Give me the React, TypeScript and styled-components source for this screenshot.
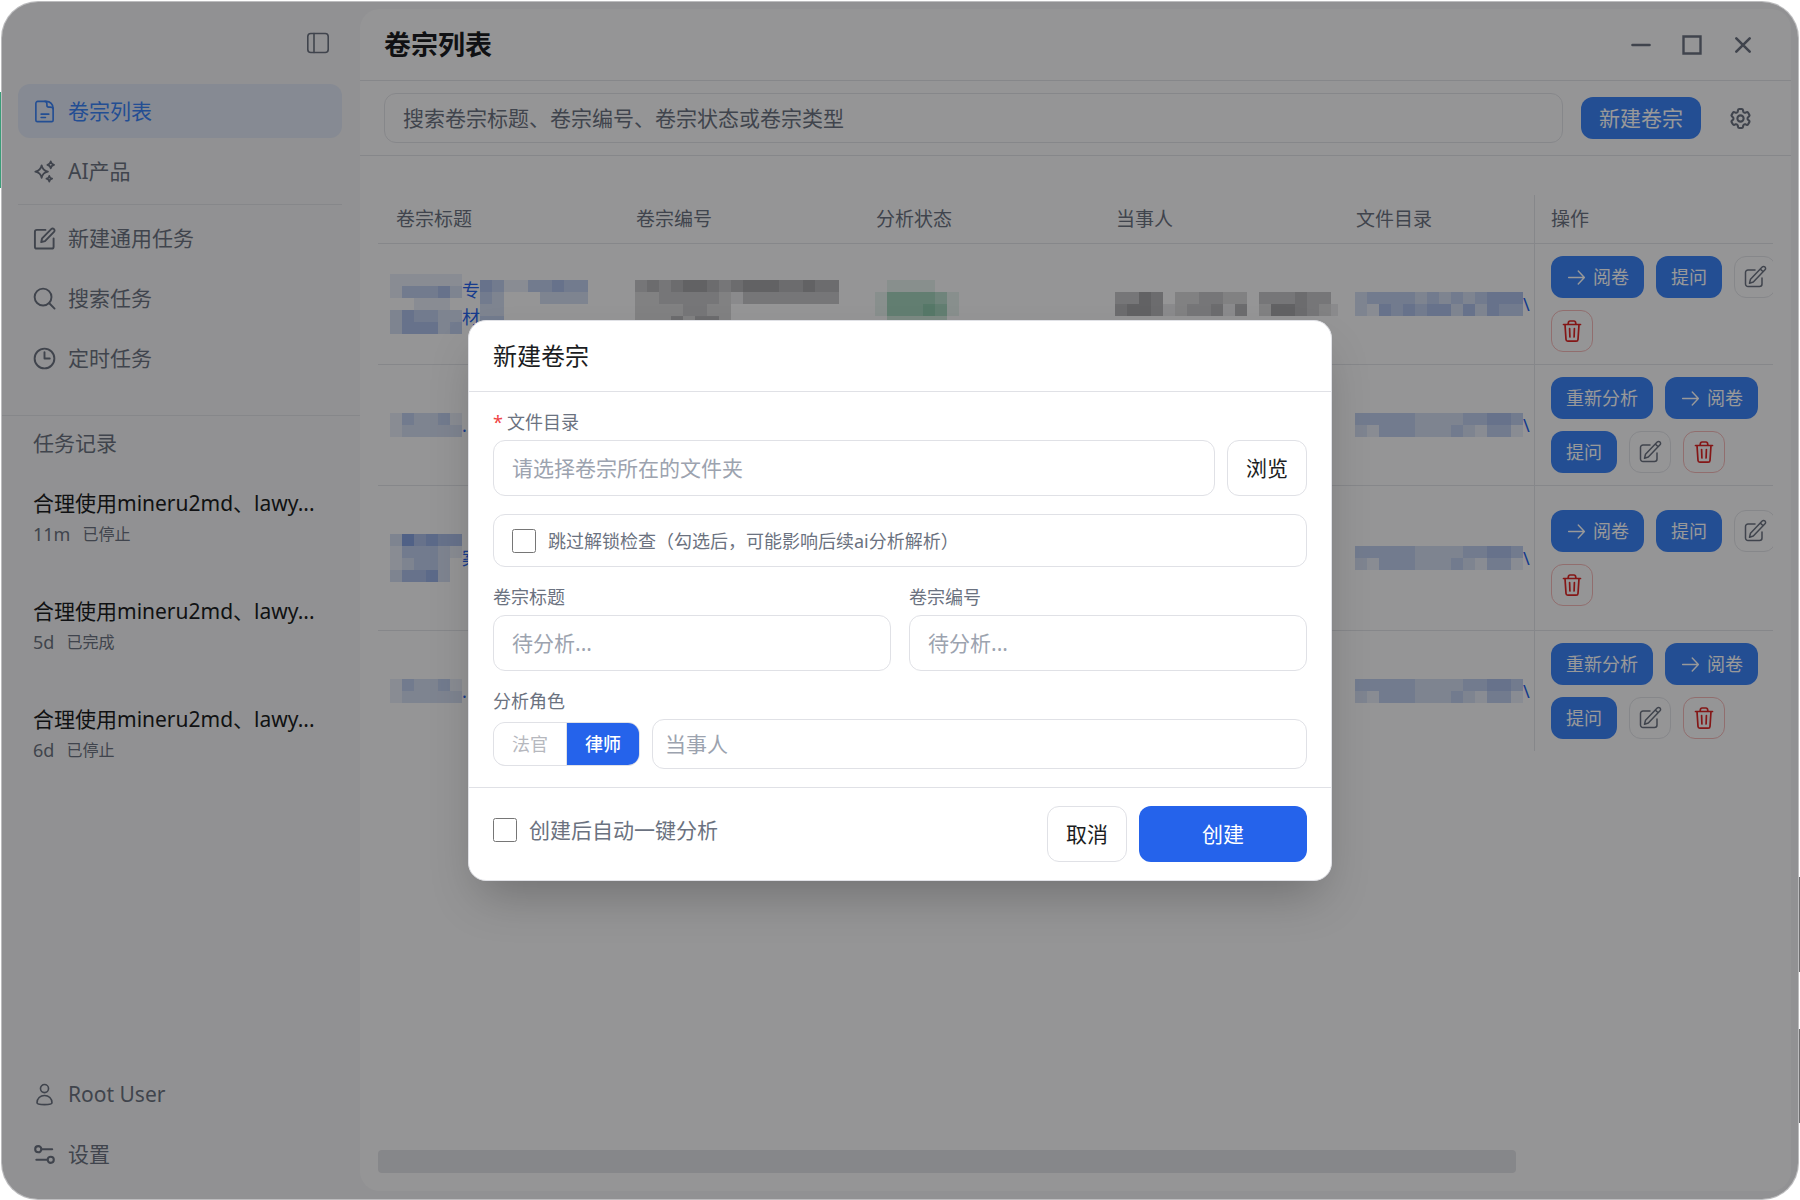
import React, { useState } from "react";
import styled, { createGlobalStyle, css } from "styled-components";

const c = {
  accent: "#3b82f6",
  primary: "#2563eb",
  text: "#1b1d22",
  muted: "#6b7280",
  faint: "#9ca3af",
  line: "#e0e1e6",
  danger: "#dc2626",
  sidebar: "#f2f2f5",
  panel: "#f9f9fb",
};

const GlobalStyle = createGlobalStyle`
  *, *::before, *::after { box-sizing: border-box; }
  body {
    margin: 0;
    background: #ffffff;
    color: ${c.text};
    font-family: "Noto Sans", "Noto Sans CJK SC", sans-serif;
    font-size: 21px;
    line-height: 30px;
  }
  button, input { font: inherit; color: inherit; }
  button { cursor: pointer; }
`;

/* ---------- shell ---------- */

const Page = styled.div`
  display: flex;
  min-height: 100vh;
  padding: 2px 2px 1px;
  background:
    linear-gradient(#3a9d78, #3a9d78) left 92px / 2px 96px no-repeat,
    linear-gradient(#6e6e70, #6e6e70) right 877px / 2px 95px no-repeat,
    linear-gradient(#6e6e70, #6e6e70) right 1029px / 2px 94px no-repeat,
    #ffffff;
`;

const Window = styled.div`
  position: relative;
  display: flex;
  flex: 1;
  min-width: 0;
  overflow: hidden;
  border-radius: 36px;
  background: ${c.sidebar};
  box-shadow: 0 0 0 1px #bcbcbe;
`;

const Sidebar = styled.aside`
  display: flex;
  flex: 0 0 358px;
  flex-direction: column;
  padding-bottom: 18px;
`;

const SidebarTop = styled.div`
  display: flex;
  justify-content: flex-end;
  padding: 20px 21px;
`;

const IconButton = styled.button`
  display: inline-flex;
  align-items: center;
  justify-content: center;
  width: 42px;
  height: 42px;
  padding: 0;
  border: 0;
  background: none;
  color: ${c.muted};
`;

const Nav = styled.nav`
  display: flex;
  flex-direction: column;
  gap: 6px;
  padding: 0 18px 0 16px;
`;

const NavItem = styled.a<{ $active?: boolean }>`
  display: flex;
  align-items: center;
  gap: 12px;
  height: 54px;
  padding: 0 15px;
  border-radius: 12px;
  text-decoration: none;
  color: ${(p) => (p.$active ? c.accent : c.muted)};
  background: ${(p) => (p.$active ? "rgba(59, 130, 246, 0.1)" : "transparent")};
`;

const NavDivider = styled.hr`
  width: 100%;
  height: 1px;
  margin: 0;
  border: 0;
  background: ${c.line};
`;

const History = styled.section`
  flex: 1;
  margin-top: 30px;
  padding: 12px 31px;
  border-top: 1px solid ${c.line};
`;

const HistoryTitle = styled.h2`
  margin: 0;
  font-size: 21px;
  font-weight: 400;
  color: ${c.muted};
`;

const HistoryList = styled.ul`
  display: flex;
  flex-direction: column;
  gap: 46px;
  margin: 30px 0 0;
  padding: 0;
  list-style: none;
`;

const HistoryName = styled.div`
  white-space: nowrap;
`;

const HistoryMeta = styled.div`
  display: flex;
  align-items: center;
  gap: 12px;
  height: 32px;
  font-size: 18px;
  color: ${c.muted};
`;

const HistoryState = styled.span`
  font-size: 16px;
`;

/* ---------- main panel ---------- */

const Main = styled.main`
  display: flex;
  flex: 1;
  flex-direction: column;
  min-width: 0;
  margin: 7px 7px 8px 0;
  border-radius: 20px;
  background: ${c.panel};
`;

const Header = styled.header`
  display: flex;
  align-items: center;
  justify-content: space-between;
  height: 72px;
  padding: 0 27px 0 24px;
  border-bottom: 1px solid ${c.line};
`;

const PageTitle = styled.h1`
  margin: 0;
  font-size: 27px;
  font-weight: 700;
`;

const WindowControls = styled.div`
  display: flex;
  gap: 9px;
`;

const Toolbar = styled.div`
  display: flex;
  align-items: center;
  gap: 18px;
  padding: 12px 30px 12px 24px;
  border-bottom: 1px solid ${c.line};
`;

const TextInput = styled.input<{ $compact?: boolean }>`
  flex: 0 1 auto;
  width: 100%;
  min-width: 0;
  height: ${(p) => (p.$compact ? 50 : 56)}px;
  padding: 0 ${(p) => (p.$compact ? 12 : 18)}px;
  border: 1px solid ${c.line};
  border-radius: 12px;
  outline: 0;
  background: #ffffff;
  &::placeholder { color: ${c.faint}; opacity: 1; }
`;

const SearchInput = styled(TextInput)`
  height: 50px;
  background: transparent;
  &::placeholder { color: ${c.muted}; }
`;

const AccentButton = styled.button<{ $small?: boolean }>`
  display: inline-flex;
  flex: none;
  align-items: center;
  gap: 6px;
  height: 42px;
  padding: 0 ${(p) => (p.$small ? 15 : 18)}px;
  border: 0;
  border-radius: 12px;
  background: ${c.accent};
  color: #ffffff;
  font-size: ${(p) => (p.$small ? 18 : 21)}px;
  white-space: nowrap;
`;

const ToolButton = styled(IconButton)`
  flex: none;
`;

const OutlineIconButton = styled(IconButton)<{ $danger?: boolean }>`
  border: 1px solid ${(p) => (p.$danger ? "#f2b8b8" : c.line)};
  border-radius: 12px;
  ${(p) => p.$danger && css`color: ${c.danger};`}
`;

const TableArea = styled.div`
  display: flex;
  flex: 1;
  flex-direction: column;
  justify-content: space-between;
  padding: 39px 18px 18px;
`;

const Table = styled.table`
  width: 100%;
  table-layout: fixed;
  border-collapse: separate;
  border-spacing: 0;
`;

const Col = styled.col<{ $w: number }>`
  width: ${(p) => p.$w}px;
`;

const HeadCell = styled.th<{ $sticky?: boolean }>`
  height: 49px;
  padding: 0 0 0 ${(p) => (p.$sticky ? 16 : 18)}px;
  border-bottom: 1px solid ${c.line};
  border-left: ${(p) => (p.$sticky ? `1px solid ${c.line}` : "0")};
  font-size: 19px;
  font-weight: 400;
  text-align: left;
  color: ${c.muted};
`;

const Row = styled.tr<{ $tall?: boolean }>`
  height: ${(p) => (p.$tall ? 145 : 121)}px;
  &:last-child { height: 120px; }
  &:last-child td { border-bottom: 0; }
`;

const Cell = styled.td<{ $lead?: boolean }>`
  padding: 0 0 0 ${(p) => (p.$lead ? 12 : 17)}px;
  border-bottom: 1px solid ${c.line};
  overflow: hidden;
  vertical-align: middle;
`;

const ActionCell = styled(Cell)`
  padding: 0 0 0 16px;
  border-left: 1px solid ${c.line};
`;

const Actions = styled.div`
  display: flex;
  flex-wrap: wrap;
  gap: 12px;
  width: 240px;
`;

const CellLink = styled.a`
  display: flex;
  align-items: center;
  text-decoration: none;
  color: ${c.primary};
  font-size: 18px;
  line-height: 27px;
`;

const Fragment = styled.span`
  display: flex;
  flex: none;
  flex-direction: column;
  width: 18px;
`;

const MosaicSvg = styled.svg`
  display: block;
  flex: none;
`;

const ScrollTrack = styled.div`
  display: grid;
  grid-template-columns: minmax(0, 1138fr) minmax(0, 257fr);
`;

const ScrollThumb = styled.div`
  height: 23px;
  border-radius: 4px;
  background: ${c.line};
`;

/* ---------- dialog ---------- */

const Overlay = styled.div`
  position: absolute;
  inset: 0;
  display: flex;
  align-items: center;
  justify-content: center;
  background: rgba(0, 0, 0, 0.4);
`;

const Dialog = styled.form`
  width: 864px;
  max-width: 90%;
  border: 1px solid ${c.line};
  border-radius: 18px;
  background: #ffffff;
  box-shadow: 0 24px 48px -12px rgba(0, 0, 0, 0.25);
`;

const DialogHeader = styled.div`
  padding: 18px 24px;
  border-bottom: 1px solid ${c.line};
`;

const DialogTitle = styled.h2`
  margin: 0;
  font-size: 24px;
  font-weight: 400;
  line-height: 34px;
`;

const DialogBody = styled.div`
  display: flex;
  flex-direction: column;
  gap: 18px;
  padding: 18px 24px;
`;

const Field = styled.div`
  display: flex;
  flex: 1;
  flex-direction: column;
  gap: 6px;
  min-width: 0;
`;

const Label = styled.label`
  font-size: 18px;
  line-height: 24px;
  color: ${c.muted};
`;

const Required = styled.span`
  margin-right: 4px;
  color: #ef4444;
`;

const Line = styled.div<{ $gap: number }>`
  display: flex;
  align-items: center;
  gap: ${(p) => p.$gap}px;
`;

const OutlineButton = styled.button`
  flex: none;
  width: 80px;
  height: 56px;
  padding: 0;
  border: 1px solid ${c.line};
  border-radius: 12px;
  background: #ffffff;
`;

const SubmitButton = styled(OutlineButton)`
  width: 168px;
  border: 0;
  background: ${c.primary};
  color: #ffffff;
`;

const CheckLabel = styled.label<{ $boxed?: boolean }>`
  display: flex;
  align-items: center;
  gap: 12px;
  height: 48px;
  color: ${c.muted};
  ${(p) =>
    p.$boxed &&
    css`
      height: 53px;
      padding: 0 18px;
      border: 1px solid ${c.line};
      border-radius: 12px;
      font-size: 18px;
    `}
`;

const Checkbox = styled.input`
  width: 24px;
  height: 24px;
  margin: 0;
`;

const Segmented = styled.div`
  display: flex;
  flex: none;
  gap: 1px;
  height: 44px;
  overflow: hidden;
  border: 1px solid ${c.line};
  border-radius: 12px;
  background: ${c.line};
`;

const Segment = styled.label<{ $on: boolean }>`
  display: flex;
  align-items: center;
  justify-content: center;
  width: 72px;
  font-size: 18px;
  font-weight: ${(p) => (p.$on ? 500 : 400)};
  color: ${(p) => (p.$on ? "#ffffff" : "#b6b8be")};
  background: ${(p) => (p.$on ? c.primary : "#ffffff")};
`;

const HiddenRadio = styled.input`
  position: absolute;
  width: 1px;
  height: 1px;
  margin: 0;
  opacity: 0;
`;

const DialogFooter = styled.div`
  display: flex;
  align-items: flex-start;
  justify-content: space-between;
  padding: 18px 24px;
  border-top: 1px solid ${c.line};
`;

/* ---------- icons ---------- */

function Icon({ size = 21, width = 1.7, children }: { size?: number; width?: number; children: React.ReactNode }) {
  return (
    <svg width={size} height={size} viewBox="0 0 24 24" fill="none" stroke="currentColor" strokeWidth={width}
      strokeLinecap="round" strokeLinejoin="round" aria-hidden="true">
      {children}
    </svg>
  );
}

const PanelIcon = () => (
  <Icon size={24} width={1.6}><rect x="1.800" y="2.500" width="20.400" height="19" rx="3" /><path d="M8 2.500v19" /></Icon>
);
const FileIcon = () => (
  <Icon size={23}><path d="M14 1.500H5A2 2 0 0 0 3 3.500v17.500a1.500 1.500 0 0 0 1.500 1.500h15a1.500 1.500 0 0 0 1.500-1.500V8.500C21 4.600 17.900 1.500 14 1.500z" /><path d="M12.500 1.500c1.800 0 2 1.200 2 2.600v1.400c0 1.200.8 2 2 2H18c1.600 0 3 .4 3 2" /><path d="M8.500 14.800h8M8.500 18.200h4.500" /></Icon>
);
const SparkleIcon = () => (
  <Icon size={23} width={1.8}>
    <path d="M9 5.500c.7 4 2.600 5.900 6.600 6.600-4 .7-5.900 2.600-6.600 6.600-.7-4-2.600-5.900-6.600-6.600 4-.7 5.900-2.600 6.600-6.600z" />
    <path d="M18.500 1.500c.4 2.200 1.400 3.200 3.500 3.600-2.100.4-3.100 1.400-3.500 3.600-.4-2.200-1.400-3.200-3.500-3.600 2.100-.4 3.100-1.400 3.500-3.600z" />
    <path d="M17 16.500c.3 1.900 1.200 2.700 3 3-1.800.3-2.700 1.100-3 3-.3-1.900-1.200-2.700-3-3 1.800-.3 2.700-1.100 3-3z" />
  </Icon>
);
const ComposeIcon = () => (
  <Icon size={23} width={2}><path d="M13 3H4a2 2 0 0 0-2 2v15.500a2 2 0 0 0 2 2h15.500a2 2 0 0 0 2-2V12" /><path d="M19 2.200a2 2 0 0 1 2.900 2.900L12.500 14.800 8.600 15.800l.9-4z" /></Icon>
);
const SearchIcon = () => (
  <Icon size={23} width={2}><circle cx="10.500" cy="10.500" r="8.800" /><path d="M17 17l5.500 5.500" /></Icon>
);
const ClockIcon = () => (
  <Icon size={23} width={2}><circle cx="12" cy="12" r="10.300" /><path d="M12 5.500V12h5.500" /></Icon>
);
const UserIcon = () => (
  <Icon size={23} width={1.7}><circle cx="12" cy="5.800" r="4.200" /><path d="M12 13c-4.500 0-7.800 3.200-7.800 7.600 0 1.200 3.500 1.900 7.800 1.900s7.800-.7 7.800-1.900c0-4.400-3.300-7.600-7.800-7.600z" /></Icon>
);
const SlidersIcon = () => (
  <Icon size={23} width={2.200}><circle cx="5.500" cy="6.500" r="3.200" /><path d="M9 6.500h11" /><circle cx="18.500" cy="17.500" r="3.200" /><path d="M15 17.500H3.500" /></Icon>
);
const MinusIcon = () => <Icon size={24} width={2.600}><path d="M3.500 12h17" /></Icon>;
const SquareIcon = () => (
  <Icon size={24} width={2.400}><path strokeLinejoin="miter" d="M3.500 3.500h17v17h-17z" /></Icon>
);
const CloseIcon = () => <Icon size={24} width={2.600}><path d="M5.300 5.300l13.400 13.400M18.700 5.300L5.300 18.700" /></Icon>;
const GearIcon = () => (
  <Icon size={25} width={2}>
    <path d="M9.600 3.900c.1-.6.600-1 1.200-1h2.400c.6 0 1.100.4 1.200 1l.2 1.300c.1.400.3.700.7.900l.3.200c.3.200.7.200 1.100.1l1.200-.5c.5-.2 1.100 0 1.400.5l1.200 2.100c.3.500.2 1.100-.3 1.500l-1 .8c-.3.200-.4.600-.4 1v.4c0 .4.100.8.400 1l1 .8c.5.400.6 1 .3 1.500l-1.200 2.100c-.3.500-.9.700-1.400.5l-1.200-.5c-.4-.1-.8-.1-1.100.1l-.3.200c-.4.200-.6.500-.7.900l-.2 1.300c-.1.600-.6 1-1.200 1h-2.400c-.6 0-1.100-.4-1.200-1l-.2-1.300c-.1-.4-.3-.7-.7-.9l-.3-.2c-.3-.2-.7-.2-1.100-.1l-1.200.5c-.5.200-1.100 0-1.400-.5l-1.200-2.100c-.3-.5-.2-1.100.3-1.500l1-.8c.3-.2.400-.6.400-1v-.4c0-.4-.1-.8-.4-1l-1-.8c-.5-.4-.6-1-.3-1.500l1.200-2.100c.3-.5.900-.7 1.400-.5l1.200.5c.4.100.8.100 1.100-.1l.3-.2c.4-.2.600-.5.700-.9z" />
    <circle cx="12" cy="12" r="3" />
  </Icon>
);
const ArrowIcon = () => <Icon size={21} width={1.600}><path d="M3 12h18M14 4.500l7 7.500-7 7.500" /></Icon>;
const EditIcon = () => (
  <Icon size={24} width={1.500}><path d="M12 5H5a2.500 2.500 0 0 0-2.500 2.500V19A2.500 2.500 0 0 0 5 21.500h11.500A2.500 2.500 0 0 0 19 19v-6" /><path d="M19.200 2a1.900 1.900 0 0 1 2.800 2.800L10.300 17l-3.800 1.200 1-4zM17.300 4l2.800 2.800" /></Icon>
);
const TrashIcon = () => (
  <Icon size={24} width={1.700}><path d="M3.500 5.500h17M5 5.500l1 15a1.800 1.800 0 0 0 1.800 1.700h8.400a1.800 1.800 0 0 0 1.800-1.700l1-15M8 5.500l.5-2.400A1.500 1.500 0 0 1 10 2h4a1.500 1.500 0 0 1 1.500 1.100L16 5.500M9.600 9.500l.3 8.500M14.400 9.500l-.3 8.500" /></Icon>
);

/* ---------- redacted values ---------- */

/* One digit per 12px tile; a higher digit is a denser tile, 0 is empty. */
function Mosaic({ rows, color }: { rows: string[]; color: string }) {
  const cols = Math.max(...rows.map((r) => r.length));
  return (
    <MosaicSvg width={cols * 12} height={rows.length * 12} shapeRendering="crispEdges" aria-hidden="true">
      {rows.flatMap((r, y) =>
        [...r].map((d, x) =>
          d === "0" ? null : (
            <rect key={`${x}-${y}`} x={x * 12} y={y * 12} width={12} height={12} fill={color} opacity={Number(d) * 0.09} />
          )
        )
      )}
    </MosaicSvg>
  );
}

const BLUE = "#2458c8";
const GRAY = "#3c3c40";
const GREEN = "#0f8f50";

type RowData = {
  id: string;
  title: React.ReactNode;
  number?: string[];
  state?: string[];
  party?: string[];
  path: string[];
  reanalyze?: boolean;
  tall?: boolean;
};

const shortTitle = (
  <>
    <Mosaic rows={["132231", "122222"]} color={BLUE} />.
  </>
);

const rows: RowData[] = [
  {
    id: "r1",
    title: (
      <>
        <Mosaic rows={["111111", "133342", "001110", "243322", "244423"]} color={BLUE} />
        <Fragment><span>专</span><span>材</span></Fragment>
        <Mosaic rows={["431133433", "320002222", "22", "33"]} color={BLUE} />
      </>
    ),
    number: ["34345543455544544", "22333332133333333", "22223322", "22242442"],
    state: ["0111100", "1444431", "1444541", "0222220"],
    party: ["335402233220333433", "4554123341402554321"],
    path: ["23333232323444", "21434344242433"],
  },
  { id: "r2", title: shortTitle, path: ["33333222233443", "21333222321331"], reanalyze: true },
  {
    id: "r3",
    title: <><Mosaic rows={["264544", "133321", "123320", "244520"]} color={BLUE} />案</>,
    path: ["33333222233443", "21333222321331"],
    tall: true,
  },
  { id: "r4", title: shortTitle, path: ["33333222233443", "21333222321331"], reanalyze: true },
];

const tasks = [
  { id: "t1", name: "合理使用mineru2md、lawy...", age: "11m", state: "已停止" },
  { id: "t2", name: "合理使用mineru2md、lawy...", age: "5d", state: "已完成" },
  { id: "t3", name: "合理使用mineru2md、lawy...", age: "6d", state: "已停止" },
];

function CaseTable() {
  return (
    <Table>
      <colgroup>
        <Col $w={240} />
        <Col $w={240} />
        <Col $w={240} />
        <Col $w={240} />
        <col />
        <Col $w={239} />
      </colgroup>
      <thead>
        <tr>
          {["卷宗标题", "卷宗编号", "分析状态", "当事人", "文件目录"].map((h) => <HeadCell key={h}>{h}</HeadCell>)}
          <HeadCell $sticky>操作</HeadCell>
        </tr>
      </thead>
      <tbody>
        {rows.map((r) => (
          <Row key={r.id} $tall={r.tall}>
            <Cell $lead><CellLink href="#">{r.title}</CellLink></Cell>
            <Cell>{r.number && <Mosaic rows={r.number} color={GRAY} />}</Cell>
            <Cell>{r.state && <Mosaic rows={r.state} color={GREEN} />}</Cell>
            <Cell>{r.party && <Mosaic rows={r.party} color={GRAY} />}</Cell>
            <Cell><CellLink href="#"><Mosaic rows={r.path} color={BLUE} />\</CellLink></Cell>
            <ActionCell>
              <Actions>
                {r.reanalyze && <AccentButton $small>重新分析</AccentButton>}
                <AccentButton $small><ArrowIcon />阅卷</AccentButton>
                <AccentButton $small>提问</AccentButton>
                <OutlineIconButton aria-label="编辑"><EditIcon /></OutlineIconButton>
                <OutlineIconButton $danger aria-label="删除"><TrashIcon /></OutlineIconButton>
              </Actions>
            </ActionCell>
          </Row>
        ))}
      </tbody>
    </Table>
  );
}

function CreateDialog() {
  const [role, setRole] = useState("律师");
  return (
    <Dialog role="dialog" aria-labelledby="dialog-title" onSubmit={(e) => e.preventDefault()}>
      <DialogHeader><DialogTitle id="dialog-title">新建卷宗</DialogTitle></DialogHeader>
      <DialogBody>
        <Field>
          <Label htmlFor="folder"><Required>*</Required>文件目录</Label>
          <Line $gap={12}>
            <TextInput id="folder" placeholder="请选择卷宗所在的文件夹" />
            <OutlineButton type="button">浏览</OutlineButton>
          </Line>
        </Field>
        <CheckLabel $boxed>
          <Checkbox type="checkbox" />
          跳过解锁检查（勾选后，可能影响后续ai分析解析）
        </CheckLabel>
        <Line $gap={18}>
          <Field>
            <Label htmlFor="case-title">卷宗标题</Label>
            <TextInput id="case-title" placeholder="待分析..." />
          </Field>
          <Field>
            <Label htmlFor="case-number">卷宗编号</Label>
            <TextInput id="case-number" placeholder="待分析..." />
          </Field>
        </Line>
        <Field>
          <Label htmlFor="party">分析角色</Label>
          <Line $gap={12}>
            <Segmented>
              {["法官", "律师"].map((r) => (
                <Segment key={r} $on={role === r}>
                  <HiddenRadio type="radio" name="role" checked={role === r} onChange={() => setRole(r)} />
                  {r}
                </Segment>
              ))}
            </Segmented>
            <TextInput id="party" $compact placeholder="当事人" />
          </Line>
        </Field>
      </DialogBody>
      <DialogFooter>
        <CheckLabel><Checkbox type="checkbox" />创建后自动一键分析</CheckLabel>
        <Line $gap={12}>
          <OutlineButton type="button">取消</OutlineButton>
          <SubmitButton type="submit">创建</SubmitButton>
        </Line>
      </DialogFooter>
    </Dialog>
  );
}

export default function App() {
  return (
    <Page>
      <GlobalStyle />
      <Window>
        <Sidebar>
          <SidebarTop><IconButton aria-label="收起侧栏"><PanelIcon /></IconButton></SidebarTop>
          <Nav>
            <NavItem href="#" $active><FileIcon />卷宗列表</NavItem>
            <NavItem href="#"><SparkleIcon />AI产品</NavItem>
            <NavDivider />
            <NavItem href="#"><ComposeIcon />新建通用任务</NavItem>
            <NavItem href="#"><SearchIcon />搜索任务</NavItem>
            <NavItem href="#"><ClockIcon />定时任务</NavItem>
          </Nav>
          <History>
            <HistoryTitle>任务记录</HistoryTitle>
            <HistoryList>
              {tasks.map((t) => (
                <li key={t.id}>
                  <HistoryName>{t.name}</HistoryName>
                  <HistoryMeta>{t.age}<HistoryState>{t.state}</HistoryState></HistoryMeta>
                </li>
              ))}
            </HistoryList>
          </History>
          <Nav>
            <NavItem href="#"><UserIcon />Root User</NavItem>
            <NavItem href="#"><SlidersIcon />设置</NavItem>
          </Nav>
        </Sidebar>
        <Main>
          <Header>
            <PageTitle>卷宗列表</PageTitle>
            <WindowControls>
              <IconButton aria-label="最小化"><MinusIcon /></IconButton>
              <IconButton aria-label="最大化"><SquareIcon /></IconButton>
              <IconButton aria-label="关闭"><CloseIcon /></IconButton>
            </WindowControls>
          </Header>
          <Toolbar>
            <SearchInput aria-label="搜索" placeholder="搜索卷宗标题、卷宗编号、卷宗状态或卷宗类型" />
            <AccentButton>新建卷宗</AccentButton>
            <ToolButton aria-label="设置"><GearIcon /></ToolButton>
          </Toolbar>
          <TableArea>
            <CaseTable />
            <ScrollTrack><ScrollThumb /></ScrollTrack>
          </TableArea>
        </Main>
        <Overlay><CreateDialog /></Overlay>
      </Window>
    </Page>
  );
}
